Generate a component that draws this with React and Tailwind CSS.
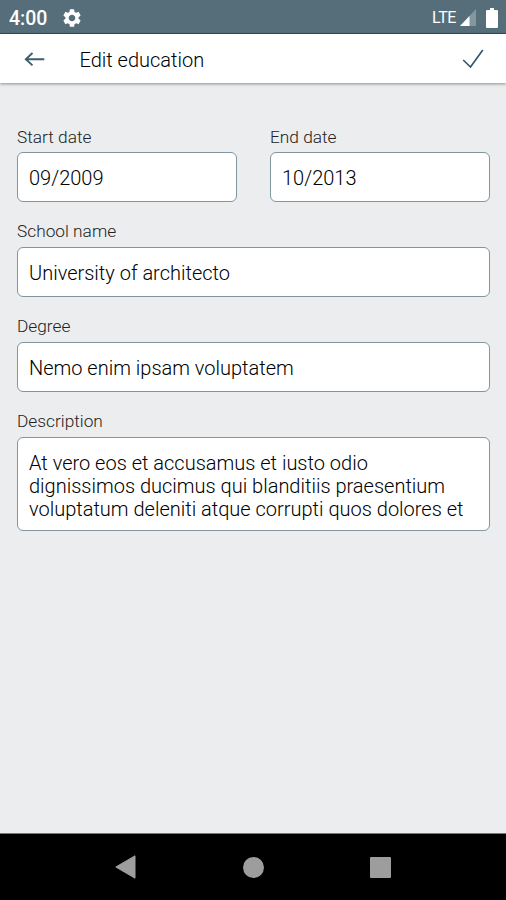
import { MdSettings } from 'react-icons/md'

function StatusBar() {
    return (
        <div className="h-[34px] shrink-0 bg-[#566e79] border-b border-[#31505f] flex items-center justify-between pl-[9px] pr-2 text-white">
            <div className="flex items-center gap-[14px] pt-[2px]">
                <span className="pt-[2px] text-[19.5px] leading-none font-medium">4:00</span>
                <MdSettings className="size-[22px]" />
            </div>
            <div className="flex items-center pt-[2px]">
                <span className="text-[16px] leading-none tracking-[-0.4px]">LTE</span>
                <svg className="ml-[4px] w-[16px] h-[17px]" viewBox="0 0 16 17">
                    <path d="M16 0v17H0z" fill="#8496a0" />
                    <path d="M9.5 7v10H0z" fill="#fff" />
                </svg>
                <svg className="ml-[10px] w-[12px] h-[20px]" viewBox="0 0 12 20">
                    <path d="M4 0h4v2h3a1 1 0 0 1 1 1v16a1 1 0 0 1-1 1H1a1 1 0 0 1-1-1V3a1 1 0 0 1 1-1h3z" fill="#fff" />
                </svg>
            </div>
        </div>
    )
}

function Header() {
    return (
        <header className="h-[49px] shrink-0 bg-white shadow-[0_1px_3px_rgba(0,0,0,0.4)] flex items-center pl-6 pr-[22px]">
            <svg className="w-[21px] h-[16px]" viewBox="0 0 21 16" fill="none" stroke="#3d5e6c" strokeWidth="1.9">
                <path d="M20.3 8.2H2M8.5 2L1.8 8.2l6.7 6.2" />
            </svg>
            <h1 className="flex-1 pl-[34.5px] pt-[3px] text-[20px] leading-6 font-light text-black">Edit education</h1>
            <svg className="w-[22px] h-[20px]" viewBox="0 0 22 20" fill="none" stroke="#31596c" strokeWidth="1.7">
                <path d="M1.2 11l7.3 7L20.8 1" />
            </svg>
        </header>
    )
}

function Field({ label, value, multiline }) {
    return (
        <label className="block flex-1">
            <span className="block h-[25.7px] text-[17.3px] leading-[20.4px] font-light text-[#222]">{label}</span>
            {multiline ? (
                <textarea
                    readOnly
                    value={value}
                    className="block w-full h-[94px] resize-none overflow-hidden rounded-[6px] border border-[#81969f] bg-white pl-[11px] pr-2 pt-[14px] text-[20px] leading-[22.8px] font-light text-black outline-none"
                />
            ) : (
                <input
                    readOnly
                    value={value}
                    className="block w-full h-[50px] rounded-[6px] border border-[#81969f] bg-white px-[11px] pt-[2px] text-[20px] font-light text-black outline-none"
                />
            )}
        </label>
    )
}

function NavigationBar() {
    return (
        <nav className="h-[67px] shrink-0 bg-black border-t border-[#777] flex items-center justify-between px-[115px]">
            <svg className="w-[21px] h-[24px]" viewBox="0 0 21 24">
                <path d="M20 .8v22.4L.8 12z" fill="#9d9d9d" stroke="#9d9d9d" strokeLinejoin="round" />
            </svg>
            <div className="size-[21px] rounded-full bg-[#9d9d9d]"></div>
            <div className="size-[21px] rounded-[1px] bg-[#9d9d9d]"></div>
        </nav>
    )
}

export default function App() {
    return (
        <div className="h-screen flex flex-col bg-[#ebedef] font-['Roboto',sans-serif]">
            <StatusBar />
            <Header />

            {/* Form */}
            <main className="flex-1 pl-[17px] pr-4 pt-[43.6px] flex flex-col gap-[19.2px]">
                <div className="flex gap-[33px]">
                    <Field label="Start date" value="09/2009" />
                    <Field label="End date" value="10/2013" />
                </div>
                <div className="flex">
                    <Field label="School name" value="University of architecto" />
                </div>
                <div className="flex">
                    <Field label="Degree" value="Nemo enim ipsam voluptatem" />
                </div>
                <div className="flex">
                    <Field
                        label="Description"
                        value={'At vero eos et accusamus et iusto odio\ndignissimos ducimus qui blanditiis praesentium\nvoluptatum deleniti atque corrupti quos dolores et'}
                        multiline
                    />
                </div>
            </main>

            <NavigationBar />
        </div>
    )
}
